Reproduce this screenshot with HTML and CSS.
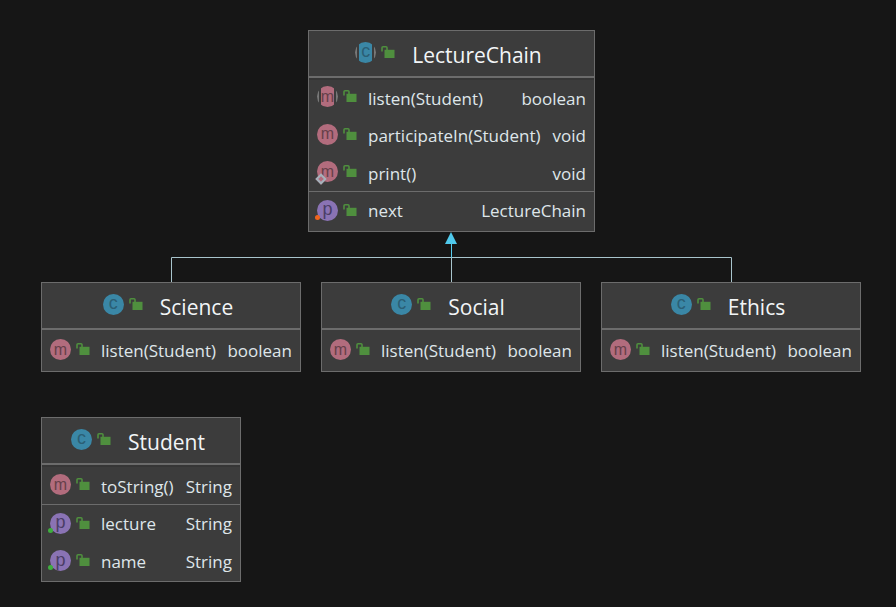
FILE: index.html
```html
<!DOCTYPE html>
<html lang="en">
<head>
<meta charset="utf-8">
<title>LectureChain diagram</title>
<link rel="stylesheet" href="styles.css">
</head>
<body>
<svg width="0" height="0" class="defs" aria-hidden="true">
  <symbol id="lock" viewBox="0 0 14 12">
    <path d="M1 5.5V1.8Q1 .8 2 .8H5Q6 .8 6 1.8V4" fill="none" stroke="#4f8f3e" stroke-width="1.6"/>
    <rect x="3.5" y="3.8" width="10" height="8.2" fill="#4f8f3e"/>
  </symbol>
</svg>

<main class="canvas">
  <svg class="edges" width="896" height="607" viewBox="0 0 896 607" aria-hidden="true">
    <path d="M171.5 282V257.5H731.5V282M451.5 282V244" fill="none" stroke="#a8c4cc" stroke-width="1"/>
    <path d="M451.5 244V257.5" fill="none" stroke="#58cdee" stroke-width="1"/>
    <path d="M451 232L457 244H445Z" fill="#4fc9ec"/>
  </svg>

  <section class="node node-chain">
    <header class="head">
      <span class="ic ic-c ic-abs"><span>c</span></span>
      <svg class="lock"><use href="#lock"/></svg>
      <h2 class="title">LectureChain</h2>
    </header>
    <div class="group group-flush">
      <div class="row"><span class="ic ic-m ic-abs"><span>m</span></span><svg class="lock"><use href="#lock"/></svg><span class="name">listen(Student)</span><span class="type">boolean</span></div>
      <div class="row"><span class="ic ic-m"><span>m</span></span><svg class="lock"><use href="#lock"/></svg><span class="name">participateIn(Student)</span><span class="type">void</span></div>
      <div class="row"><span class="ic ic-m"><span>m</span><i class="badge-diamond"></i></span><svg class="lock"><use href="#lock"/></svg><span class="name">print()</span><span class="type">void</span></div>
    </div>
    <div class="group group-last">
      <div class="row"><span class="ic ic-p"><span>p</span><i class="dot dot-orange"></i></span><svg class="lock"><use href="#lock"/></svg><span class="name">next</span><span class="type">LectureChain</span></div>
    </div>
  </section>

  <section class="node node-science">
    <header class="head">
      <span class="ic ic-c"><span>c</span></span>
      <svg class="lock"><use href="#lock"/></svg>
      <h2 class="title">Science</h2>
    </header>
    <div class="group group-single">
      <div class="row"><span class="ic ic-m"><span>m</span></span><svg class="lock"><use href="#lock"/></svg><span class="name">listen(Student)</span><span class="type">boolean</span></div>
    </div>
  </section>

  <section class="node node-social">
    <header class="head">
      <span class="ic ic-c"><span>c</span></span>
      <svg class="lock"><use href="#lock"/></svg>
      <h2 class="title">Social</h2>
    </header>
    <div class="group group-single">
      <div class="row"><span class="ic ic-m"><span>m</span></span><svg class="lock"><use href="#lock"/></svg><span class="name">listen(Student)</span><span class="type">boolean</span></div>
    </div>
  </section>

  <section class="node node-ethics">
    <header class="head">
      <span class="ic ic-c"><span>c</span></span>
      <svg class="lock"><use href="#lock"/></svg>
      <h2 class="title">Ethics</h2>
    </header>
    <div class="group group-single">
      <div class="row"><span class="ic ic-m"><span>m</span></span><svg class="lock"><use href="#lock"/></svg><span class="name">listen(Student)</span><span class="type">boolean</span></div>
    </div>
  </section>

  <section class="node node-student">
    <header class="head">
      <span class="ic ic-c"><span>c</span></span>
      <svg class="lock"><use href="#lock"/></svg>
      <h2 class="title">Student</h2>
    </header>
    <div class="group">
      <div class="row"><span class="ic ic-m"><span>m</span></span><svg class="lock"><use href="#lock"/></svg><span class="name">toString()</span><span class="type">String</span></div>
    </div>
    <div class="group group-last">
      <div class="row"><span class="ic ic-p"><span>p</span><i class="dot dot-green"></i></span><svg class="lock"><use href="#lock"/></svg><span class="name">lecture</span><span class="type">String</span></div>
      <div class="row"><span class="ic ic-p"><span>p</span><i class="dot dot-green"></i></span><svg class="lock"><use href="#lock"/></svg><span class="name">name</span><span class="type">String</span></div>
    </div>
  </section>
</main>
</body>
</html>
```
FILE: styles.css
```css
* { box-sizing: border-box; }

html, body {
  margin: 0;
  padding: 0;
  background: #161616;
}

body {
  font-family: "Open Sans", "Noto Sans", "Liberation Sans", sans-serif;
  color: #dfe6ea;
  overflow: hidden;
}

.defs { position: absolute; }

.canvas {
  position: relative;
  width: 896px;
  height: 607px;
}

.edges {
  position: absolute;
  left: 0;
  top: 0;
}

.node {
  position: absolute;
  display: flex;
  flex-direction: column;
  background: #3c3c3c;
  border: 1px solid #6c6c6c;
}

.node-chain { left: 308px; top: 30px; width: 287px; height: 202px; }
.node-science { left: 41px; top: 282px; width: 260px; height: 90px; }
.node-social { left: 321px; top: 282px; width: 260px; height: 90px; }
.node-ethics { left: 601px; top: 282px; width: 260px; height: 90px; }
.node-student { left: 41px; top: 417px; width: 200px; height: 165px; }

.head {
  display: flex;
  align-items: center;
  justify-content: center;
  height: 47px;
  padding-right: 6px;
  padding-bottom: 2px;
  border-bottom: 2px solid #6c6c6c;
  flex: none;
}

.title {
  margin: 0 0 0 17px;
  padding-top: 4px;
  font-size: 21px;
  font-weight: 400;
  line-height: 30px;
  color: #f2f5f7;
}

.group {
  display: flex;
  flex-direction: column;
  padding-top: 1px;
  border-bottom: 1px solid #6c6c6c;
  box-shadow: inset 0 2px 0 #363636;
}

.group-flush { padding-top: 0; }

.group-last,
.group-single {
  border-bottom: 0;
  box-shadow: none;
}

.group-last { padding-top: 0; }

.row {
  display: flex;
  align-items: center;
  height: 37.5px;
  padding: 0 8px;
  font-size: 17px;
  line-height: 24px;
}

.name {
  margin-left: 11px;
  white-space: nowrap;
  padding-top: 4px;
}

.type {
  margin-left: auto;
  white-space: nowrap;
  padding-top: 4px;
}

.group-last .name,
.group-last .type { padding-top: 2px; }

.group-single .name,
.group-single .type { padding-top: 3px; }

.ic {
  position: relative;
  display: flex;
  align-items: center;
  justify-content: center;
  flex: none;
  width: 21px;
  height: 21px;
  border-radius: 50%;
  font-family: "Liberation Sans", sans-serif;
  line-height: 21px;
}

.ic-c { background: #3a87a6; color: #2b5f75; font-size: 18px; padding-bottom: 2px; }
.ic-m { background: #b26c7d; color: #66404a; font-size: 16px; padding-bottom: 1px; }
.ic-p { background: #8a73b4; color: #4a3d66; font-size: 18px; padding-bottom: 1px; }

.ic-c.ic-abs {
  background: linear-gradient(to right, #787878 0 2px, #3c3c3c 2px 4px, #3a87a6 4px 17px, #3c3c3c 17px 19px, #787878 19px);
}

.ic-m.ic-abs {
  background: linear-gradient(to right, #787878 0 2px, #3c3c3c 2px 4px, #b26c7d 4px 17px, #3c3c3c 17px 19px, #787878 19px);
}

.lock {
  flex: none;
  width: 14px;
  height: 12px;
  margin-left: 5px;
  margin-bottom: 1px;
}

.dot {
  position: absolute;
  left: -2px;
  bottom: 1px;
  width: 5px;
  height: 5px;
  border-radius: 50%;
}

.dot-orange { background: #f0641e; }
.dot-green { background: #3fae3f; }

.badge-diamond {
  position: absolute;
  left: 0;
  bottom: -1px;
  width: 8px;
  height: 8px;
  background: #b26c7d;
  border: 2px solid #a4b2bb;
  transform: rotate(45deg);
}
```
